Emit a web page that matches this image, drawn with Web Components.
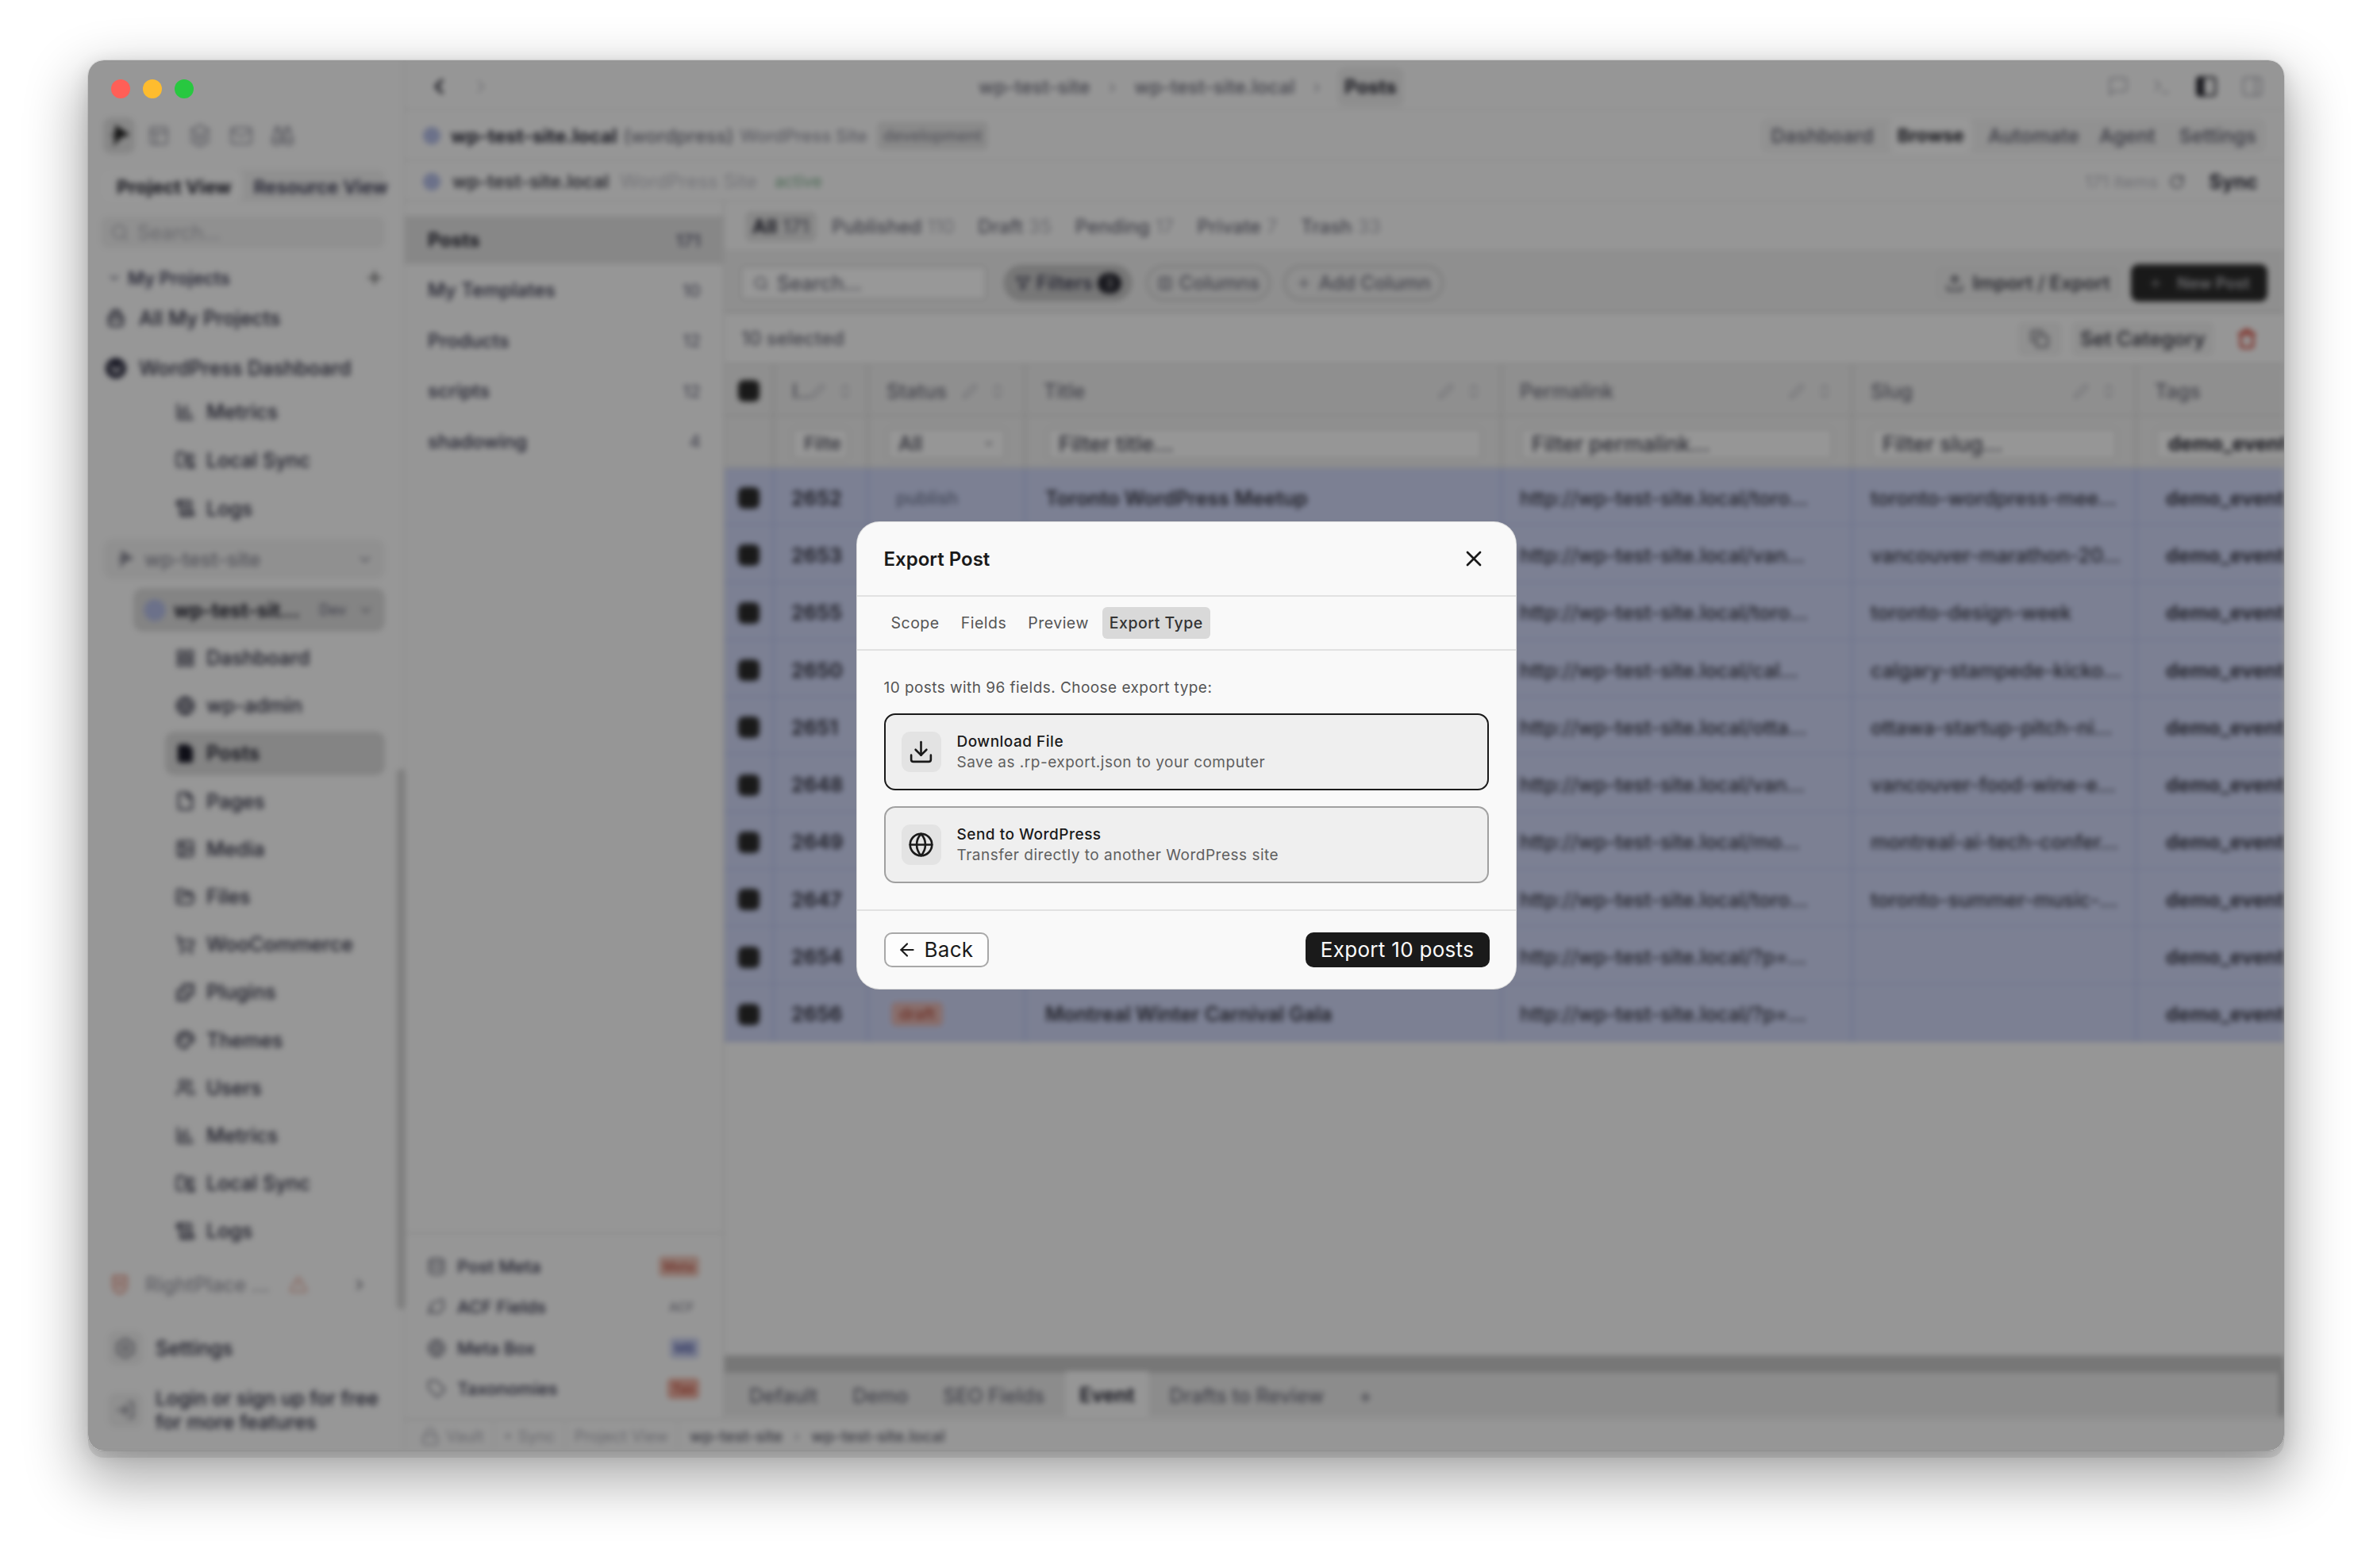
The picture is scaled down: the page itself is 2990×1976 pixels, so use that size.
<!DOCTYPE html>
<html lang="en">
<head>
<meta charset="utf-8">
<title>Export Post</title>
<style>
  html, body { margin: 0; background: #fff; }
  body { width: 2990px; height: 1976px; padding: 76px 0 0 111px; box-sizing: border-box; font-family: Inter, "Liberation Sans", sans-serif; overflow: hidden; }
</style>
</head>
<body>
<app-window>
  <side-bar></side-bar>
  <main-pane></main-pane>
  <traffic-lights slot="chrome"></traffic-lights>
  <export-dialog slot="dialog"></export-dialog>
</app-window>

<script>
const ICONS = {
  download: '<path d="M21 15v4a2 2 0 0 1-2 2H5a2 2 0 0 1-2-2v-4"/><path d="M7 10l5 5 5-5"/><path d="M12 15V3"/>',
  globe: '<circle cx="12" cy="12" r="10"/><path d="M2 12h20"/><path d="M12 2a15.3 15.3 0 0 1 4 10 15.3 15.3 0 0 1-4 10 15.3 15.3 0 0 1-4-10 15.3 15.3 0 0 1 4-10z"/>',
  x: '<path d="M18 6 6 18"/><path d="m6 6 12 12"/>',
  back: '<path d="M19 12H5"/><path d="m12 19-7-7 7-7"/>',
  metrics: '<path d="M3 3v16a2 2 0 0 0 2 2h16"/><path d="M8 17V9"/><path d="M13 17V5"/><path d="M18 17v-3"/>',
  sync: '<path d="M9 20H4a2 2 0 0 1-2-2V5a2 2 0 0 1 2-2h3.9a2 2 0 0 1 1.69.9l.81 1.2a2 2 0 0 0 1.67.9H20a2 2 0 0 1 2 2v.5"/><path d="M12 10v4h4"/><path d="m12 14 1.535-1.605a5 5 0 0 1 8 1.5"/><path d="M22 22v-4h-4"/><path d="m22 18-1.535 1.605a5 5 0 0 1-8-1.5"/>',
  logs: '<path d="M15 12h-5"/><path d="M15 8h-5"/><path d="M19 17V5a2 2 0 0 0-2-2H4"/><path d="M8 21h12a2 2 0 0 0 2-2v-1a1 1 0 0 0-1-1H11a1 1 0 0 0-1 1v1a2 2 0 1 1-4 0V5a2 2 0 1 0-4 0v2a1 1 0 0 0 1 1h3"/>',
  dashboard: '<rect x="3" y="3" width="7" height="8" rx="1"/><rect x="14" y="3" width="7" height="8" rx="1"/><rect x="14" y="14" width="7" height="7" rx="1"/><rect x="3" y="14" width="7" height="7" rx="1"/>',
  post: '<path fill="currentColor" d="M15 2H6a2 2 0 0 0-2 2v16a2 2 0 0 0 2 2h12a2 2 0 0 0 2-2V7Z"/>',
  file: '<path d="M15 2H6a2 2 0 0 0-2 2v16a2 2 0 0 0 2 2h12a2 2 0 0 0 2-2V7Z"/><path d="M14 2v4a2 2 0 0 0 2 2h4"/>',
  image: '<rect x="3" y="3" width="18" height="18" rx="2"/><circle cx="9" cy="9" r="2"/><path d="m21 15-3.086-3.086a2 2 0 0 0-2.828 0L6 21"/>',
  folder: '<path d="m6 14 1.5-2.9A2 2 0 0 1 9.24 10H20a2 2 0 0 1 1.94 2.5l-1.54 6a2 2 0 0 1-1.95 1.5H4a2 2 0 0 1-2-2V5a2 2 0 0 1 2-2h3.9a2 2 0 0 1 1.69.9l.81 1.2a2 2 0 0 0 1.67.9H18a2 2 0 0 1 2 2v2"/>',
  cart: '<circle cx="8" cy="21" r="1"/><circle cx="19" cy="21" r="1"/><path d="M2.05 2.05h2l2.66 12.42a2 2 0 0 0 2 1.58h9.78a2 2 0 0 0 1.95-1.57l1.65-7.43H5.12"/>',
  puzzle: '<path d="M19.439 7.85c-.049.322.059.648.289.878l1.568 1.568c.47.47.706 1.087.706 1.704s-.235 1.233-.706 1.704l-1.611 1.611a.98.98 0 0 1-.837.276c-.47-.07-.802-.48-.968-.925a2.501 2.501 0 1 0-3.214 3.214c.446.166.855.497.925.968a.979.979 0 0 1-.276.837l-1.61 1.61a2.404 2.404 0 0 1-1.705.707 2.402 2.402 0 0 1-1.704-.706l-1.568-1.568a1.026 1.026 0 0 0-.877-.29c-.493.074-.84.504-1.02.968a2.5 2.5 0 1 1-3.237-3.237c.464-.18.894-.527.967-1.02a1.026 1.026 0 0 0-.289-.877l-1.568-1.568A2.402 2.402 0 0 1 1.998 12c0-.617.236-1.234.706-1.704L4.23 8.77c.24-.24.581-.353.917-.303.515.077.877.528 1.073 1.01a2.5 2.5 0 1 0 3.259-3.259c-.482-.196-.933-.558-1.01-1.073-.05-.336.062-.676.303-.917l1.525-1.525A2.402 2.402 0 0 1 12 1.998c.617 0 1.234.236 1.704.706l1.568 1.568c.23.23.556.338.877.29.493-.074.84-.504 1.02-.968a2.5 2.5 0 1 1 3.237 3.237c-.464.18-.894.527-.967 1.02Z"/>',
  palette: '<path d="M12 22a1 1 0 0 1 0-20 10 9 0 0 1 10 9 5 5 0 0 1-5 5h-2.25a1.75 1.75 0 0 0-1.4 2.8l.3.4a1.75 1.75 0 0 1-1.4 2.8z"/><circle cx="13.5" cy="6.5" r="1"/><circle cx="17.5" cy="10.5" r="1"/><circle cx="6.5" cy="12.5" r="1"/><circle cx="8.5" cy="7.5" r="1"/>',
  users: '<path d="M16 21v-2a4 4 0 0 0-4-4H6a4 4 0 0 0-4 4v2"/><circle cx="9" cy="7" r="4"/><path d="M22 21v-2a4 4 0 0 0-3-3.87"/><path d="M16 3.13a4 4 0 0 1 0 7.75"/>',
  gear: '<path d="M12 2l8.66 5v10L12 22l-8.66-5V7z"/><circle cx="12" cy="12" r="3"/>',
  login: '<path d="M15 3h4a2 2 0 0 1 2 2v14a2 2 0 0 1-2 2h-4"/><path d="m10 17 5-5-5-5"/><path d="M15 12H3"/>',
  layout: '<rect x="3" y="3" width="18" height="18" rx="2"/><path d="M3 9h18"/><path d="M9 21V9"/>',
  layers: '<path d="m12 2 9 5-9 5-9-5z"/><path d="m3 12 9 5 9-5"/><path d="m3 17 9 5 9-5"/>',
  mail: '<rect x="2" y="4" width="20" height="16" rx="2"/><path d="m22 7-10 6L2 7"/>',
  binoculars: '<path d="M10 10h4"/><path d="M19 7V4a1 1 0 0 0-1-1h-2a1 1 0 0 0-1 1v3"/><path d="M20 21a2 2 0 0 0 2-2v-3.851c0-1.39-2-2.962-2-4.829V8a1 1 0 0 0-1-1h-4a1 1 0 0 0-1 1v11a2 2 0 0 0 2 2z"/><path d="M22 16H2"/><path d="M4 21a2 2 0 0 1-2-2v-3.851c0-1.39 2-2.962 2-4.829V8a1 1 0 0 1 1-1h4a1 1 0 0 1 1 1v11a2 2 0 0 1-2 2z"/><path d="M9 7V4a1 1 0 0 0-1-1H6a1 1 0 0 0-1 1v3"/>',
  briefcase: '<rect x="4" y="8" width="16" height="13" rx="3"/><path d="M8 8V4a1 1 0 0 1 1-1h6a1 1 0 0 1 1 1v4"/><path d="M4 13h16"/>',
  mark: '<path fill="currentColor" stroke="none" d="M8 1l15 10-9 3-8 9 2-10-5-2 5-1z"/>',
  wp: '<circle fill="currentColor" cx="12" cy="12" r="11"/><path stroke="#fff" stroke-width="1.5" d="M6 8l4 10 2-7 3 7 3-10"/>',
  dot: '<circle fill="currentColor" stroke="none" cx="12" cy="12" r="11"/>',
  search: '<circle cx="11" cy="11" r="8"/><path d="m21 21-4.3-4.3"/>',
  plus: '<path d="M5 12h14"/><path d="M12 5v14"/>',
  down: '<path d="m6 9 6 6 6-6"/>',
  right: '<path d="m9 18 6-6-6-6"/>',
  left: '<path d="m15 18-6-6 6-6"/>',
  funnel: '<path d="M3 4h18l-7 8v6l-4 2v-8z"/>',
  columns: '<rect x="3" y="3" width="18" height="18" rx="2"/><path d="M9 3v18"/><path d="M15 3v18"/>',
  pencil: '<path d="M17 3a2.8 2.8 0 1 1 4 4L7.5 20.5 2 22l1.5-5.5z"/>',
  sort: '<path d="m7 15 5 5 5-5"/><path d="m7 9 5-5 5 5"/>',
  copy: '<rect x="8" y="8" width="14" height="14" rx="2"/><path d="M4 16c-1.1 0-2-.9-2-2V4c0-1.1.9-2 2-2h10c1.1 0 2 .9 2 2"/>',
  trash: '<path d="M3 6h18"/><path d="M19 6v14c0 1-1 2-2 2H7c-1 0-2-1-2-2V6"/><path d="M8 6V4c0-1 1-2 2-2h4c1 0 2 1 2 2v2"/>',
  upload: '<path d="M21 15v4a2 2 0 0 1-2 2H5a2 2 0 0 1-2-2v-4"/><path d="m17 8-5-5-5 5"/><path d="M12 3v12"/>',
  refresh: '<path d="M21 12a9 9 0 1 1-3-6.7L21 8"/><path d="M21 3v5h-5"/>',
  lock: '<rect x="3" y="11" width="18" height="11" rx="2"/><path d="M7 11V7a5 5 0 0 1 10 0v4"/>',
  alert: '<path d="m21.7 18-8-14a2 2 0 0 0-3.5 0l-8 14A2 2 0 0 0 4 21h16a2 2 0 0 0 1.7-3"/><path d="M12 9v4"/><path d="M12 17h.01"/>',
  crest: '<path d="M5 3h14v10a7 8 0 0 1-14 0z"/><path d="M9 9h6"/><path d="M9 13h6"/>',
  message: '<path d="M21 15a2 2 0 0 1-2 2H7l-4 4V5a2 2 0 0 1 2-2h14a2 2 0 0 1 2 2z"/>',
  terminal: '<path d="m4 17 6-6-6-6"/><path d="M12 19h8"/>',
  panel: '<rect x="3" y="3" width="18" height="18" rx="2"/><path fill="currentColor" d="M3 5a2 2 0 0 1 2-2h4v18H5a2 2 0 0 1-2-2z"/>',
  panelr: '<rect x="3" y="3" width="18" height="18" rx="2"/><path d="M15 3v18"/>',
  database: '<ellipse cx="12" cy="5" rx="9" ry="3"/><path d="M3 5v14a9 3 0 0 0 18 0V5"/><path d="M3 12a9 3 0 0 0 18 0"/>',
  tag: '<path d="M12.6 2.6a2 2 0 0 0-1.4-.6H4a2 2 0 0 0-2 2v7.2a2 2 0 0 0 .6 1.4l8.7 8.7a2.4 2.4 0 0 0 3.4 0l6.6-6.6a2.4 2.4 0 0 0 0-3.4z"/>',
  leaf: '<path d="M11 20A7 7 0 0 1 9.8 6.1C15.5 5 17 4.5 19 2c1 2 2 4.2 2 8 0 5.5-4.8 10-10 10Z"/><path d="M2 21c0-3 1.9-5.4 5-6"/>'
};

// small inline svg, stroke follows the text colour
class UiIcon extends HTMLElement {
  connectedCallback() {
    const size = this.getAttribute('size') || 24;
    const sw = this.getAttribute('sw') || 2;
    this.attachShadow({ mode: 'open' }).innerHTML = `
      <style>:host { display: inline-flex; flex: none; width: ${size}px; height: ${size}px; } svg { display: block; }</style>
      <svg width="${size}" height="${size}" viewBox="0 0 24 24" fill="none" stroke="currentColor" stroke-width="${sw}" stroke-linecap="round" stroke-linejoin="round">${ICONS[this.getAttribute('name')] || ''}</svg>`;
  }
}
customElements.define('ui-icon', UiIcon);

class AppWindow extends HTMLElement {
  connectedCallback() {
    this.attachShadow({ mode: 'open' }).innerHTML = `
      <style>
        :host {
          display: block; position: relative; width: 2767px; height: 1752px; border-radius: 20px; background: #fbfbfb;
          box-shadow: 0 0 0 1px rgba(0,0,0,.07), 0 9px 0 0 rgba(0,0,0,.08), 0 30px 70px 10px rgba(0,0,0,.32), 0 6px 24px rgba(0,0,0,.12);
        }
        .clip { position: absolute; inset: 0; border-radius: 20px; overflow: hidden; background: #fbfbfb; }
        .app { display: flex; height: 100%; filter: blur(3.6px); }
        .scrim { position: absolute; inset: 0; background: rgba(0,0,0,.4); display: flex; align-items: center; justify-content: center; }
      </style>
      <div class="clip">
        <div class="app"><slot></slot></div>
        <div class="scrim"><slot name="dialog"></slot></div>
        <slot name="chrome"></slot>
      </div>`;
  }
}
customElements.define('app-window', AppWindow);

class TrafficLights extends HTMLElement {
  connectedCallback() {
    this.attachShadow({ mode: 'open' }).innerHTML = `
      <style>
        :host { position: absolute; left: 28.5px; top: 24px; display: flex; gap: 16.2px; }
        i { width: 24px; height: 24px; border-radius: 50%; }
      </style>
      <i style="background:#ff5f57"></i><i style="background:#febc2e"></i><i style="background:#28c840"></i>`;
  }
}
customElements.define('traffic-lights', TrafficLights);

// one row of the left tree
class SideItem extends HTMLElement {
  connectedCallback() {
    const h = this.getAttribute('h') || 60.2;
    const sub = this.hasAttribute('sub');
    const active = this.hasAttribute('active');
    this.attachShadow({ mode: 'open' }).innerHTML = `
      <style>
        :host { display: flex; align-items: center; height: ${h}px; padding-left: ${sub ? 81 : 0}px; color: #2a2a3e; font-size: 25px; font-weight: ${active ? 600 : 500}; }
        .row { flex: 1; height: 55px; display: flex; align-items: center; gap: ${sub ? 14 : 16}px; padding-left: ${sub ? 13 : 6}px; border-radius: 12px; background: ${active ? '#dcdcdc' : 'none'}; color: ${active ? '#1a1a28' : 'inherit'}; }
      </style>
      <div class="row"><ui-icon name="${this.getAttribute('icon')}" size="${sub ? 25 : 26}" sw="2.2"></ui-icon><span><slot></slot></span></div>`;
  }
}
customElements.define('side-item', SideItem);

class SideBar extends HTMLElement {
  connectedCallback() {
    const sub = [['dashboard','Dashboard'],['globe','wp-admin'],['post','Posts',1],['file','Pages'],['image','Media'],['folder','Files'],['cart','WooCommerce'],['puzzle','Plugins'],['palette','Themes'],['users','Users'],['metrics','Metrics'],['sync','Local Sync'],['logs','Logs']];
    this.attachShadow({ mode: 'open' }).innerHTML = `
      <style>
        :host { display: flex; flex-direction: column; position: relative; flex: none; box-sizing: border-box; width: 399px; padding: 72px 23px 0 16px; border-right: 2px solid #ececec; background: #fcfcfc; color: #2a2a3e; }
        .rail { display: flex; align-items: center; height: 46px; color: #8c8c98; }
        .rail b { display: flex; width: 40px; height: 46px; margin: 0 4px 0 3px; align-items: center; justify-content: center; border-radius: 10px; background: #e2e2e2; color: #222; }
        .rail span { display: flex; justify-content: center; width: 52px; }
        .seg { display: flex; align-items: center; height: 40px; margin-top: 20px; border-radius: 9px; background: #f0f0f0; font-size: 23.5px; font-weight: 600; color: #34344e; }
        .seg span { padding: 3px 0 0 14px; line-height: 37px; white-space: nowrap; }
        .seg .on { background: #fdfdfd; border-radius: 9px; color: #22222e; padding: 3px 14px 0 20px; font-weight: 700; font-size: 23.5px; }
        .search { display: flex; align-items: center; gap: 10px; height: 40px; margin-top: 19px; padding: 0 12px; border-radius: 9px; background: #f0f0f0; color: #adadb4; font-size: 25px; }
        .head { display: flex; align-items: center; height: 40px; margin-top: 17px; padding-left: 8px; gap: 8px; font-size: 22.5px; font-weight: 600; color: #42425a; }
        .head ui-icon:last-child { margin-left: auto; margin-right: 0; }
        .project { display: flex; align-items: center; gap: 12px; height: 51px; margin-top: 8px; padding: 0 14px; margin-left: 3px; border-radius: 12px; background: #f1f1f1; color: #8a8a96; font-size: 25px; font-weight: 500; }
        .project ui-icon:last-child { margin-left: auto; }
        .site { display: flex; align-items: center; gap: 9px; height: 55px; margin: 11px 0 3px 41px; padding: 0 14px 0 12px; border-radius: 12px; background: #dcdcdc; font-size: 24.5px; font-weight: 700; color: #22222e; }
        .site em { margin-left: auto; font-style: normal; font-size: 18px; font-weight: 500; color: #6c6c80; }
        .site ui-icon:last-child { color: #70707c; margin-left: 6px; }
        .dotblue { color: #b4bde6; }
        .rp { display: flex; align-items: center; height: 50px; margin-top: 13px; padding-left: 10px; gap: 18px; color: #9c9ca6; font-size: 25px; font-weight: 500; }
        .rp .crest { color: #e0806a; }
        .rp .warn { color: #e4a696; margin-left: 6px; }
        .rp .go { margin-left: 36px; color: #60606c; }
        .foot { display: flex; align-items: center; gap: 16px; padding-left: 9px; font-size: 25px; font-weight: 500; line-height: 30px; }
        .foot.small { font-size: 24.5px; }
        .foot b { display: flex; align-items: center; justify-content: center; width: 44px; height: 44px; border-radius: 11px; background: #f0f0f0; font-weight: 500; color: #70707c; flex: none; }
        .thumb { position: absolute; top: 893px; right: -3px; width: 11px; height: 681px; background: #d4d4d4; border-radius: 6px; }
      </style>
      <div class="rail">
        <b><ui-icon name="mark" size="30"></ui-icon></b>
        <span><ui-icon name="layout" size="28" sw="1.6"></ui-icon></span><span><ui-icon name="layers" size="32" sw="1.6"></ui-icon></span><span><ui-icon name="mail" size="30" sw="1.6"></ui-icon></span><span><ui-icon name="binoculars" size="30" sw="1.6"></ui-icon></span>
      </div>
      <div class="seg"><span class="on">Project View</span><span>Resource View</span></div>
      <div class="search"><ui-icon name="search" size="24"></ui-icon><span>Search...</span></div>
      <div class="head"><ui-icon name="down" size="18"></ui-icon><span>My Projects</span><ui-icon name="plus" size="26" style="color:#444"></ui-icon></div>
      <side-item icon="briefcase" h="62">All My Projects</side-item>
      <side-item icon="wp" h="48" style="margin-top:8px">WordPress Dashboard</side-item>
      <side-item sub icon="metrics" h="61">Metrics</side-item>
      <side-item sub icon="sync" h="61">Local Sync</side-item>
      <side-item sub icon="logs" h="61">Logs</side-item>
      <div class="project"><ui-icon name="mark" size="26"></ui-icon><span>wp-test-site</span><ui-icon name="down" size="22"></ui-icon></div>
      <div class="site"><ui-icon class="dotblue" name="dot" size="30"></ui-icon><span>wp-test-sit...</span><em>Dev</em><ui-icon name="down" size="20"></ui-icon></div>
      ${sub.map(s => `<side-item sub icon="${s[0]}" ${s[2] ? 'active' : ''}>${s[1]}</side-item>`).join('')}
      <div class="rp"><ui-icon class="crest" name="crest" size="28"></ui-icon><span>RightPlace ...</span><ui-icon class="warn" name="alert" size="24"></ui-icon><ui-icon class="go" name="right" size="22"></ui-icon></div>
      <div class="foot" style="margin-top:33px"><b><ui-icon name="gear" size="28"></ui-icon></b><span>Settings</span></div>
      <div class="foot small" style="margin-top:26px"><b><ui-icon name="login" size="26"></ui-icon></b><span>Login or sign up for free<br>for more features</span></div>
      <div class="thumb"></div>`;
  }
}
customElements.define('side-bar', SideBar);

class MainPane extends HTMLElement {
  connectedCallback() {
    this.attachShadow({ mode: 'open' }).innerHTML = `
      <style>
        :host { display: flex; flex-direction: column; flex: 1; min-width: 0; background: #fbfbfb; color: #2a2a38; }
        .bar { display: flex; align-items: center; flex: none; box-sizing: border-box; border-bottom: 2px solid #eaeaea; }
        .title { height: 63px; padding: 5px 25px 0 28px; font-size: 24px; font-weight: 500; color: #6e6e7c; }
        .title .nav { color: #2c2c38; }
        .title .nav2 { color: #c4c4ca; margin-left: 24px; }
        .crumbs { display: flex; align-items: center; margin-left: 613px; gap: 23px; white-space: nowrap; }
        .crumbs i { font-style: normal; color: #b0b0b8; }
        .crumbs b { padding: 10px 9px; margin-left: -2px; border-radius: 9px; background: #ededed; color: #22222e; font-weight: 700; }
        .tools { display: flex; align-items: center; gap: 28px; margin-left: auto; color: #a8a8b0; }
        .tools .on { color: #26262f; }
        .site { height: 64px; padding: 2px 23px 0 22px; font-size: 24px; white-space: nowrap; }
        .site b { font-weight: 700; margin-left: 12px; }
        .site > span { margin-left: 8px; color: #777784; font-weight: 500; }
        .site .lite { color: #9a9aa6; font-size: 22px; }
        .site .env { margin-left: 12px; padding: 6px 8px; border-radius: 6px; background: #e6e6e6; color: #8a8a96; font-size: 20px; }
        .views { display: flex; align-items: center; margin-left: auto; height: 44px; padding: 0 12px 0 14px; gap: 22px; border-radius: 9px; background: #f2f2f2; color: #6e6e7c; font-size: 24.5px; font-weight: 600; }
        .views b { padding: 8px 10px; margin: 0 -2px; border-radius: 8px; background: #fdfdfd; color: #26262f; font-weight: 700; font-size: 23px; }
        .env-bar { height: 51px; padding: 2px 33px 0 22px; font-size: 23px; white-space: nowrap; }
        .env-bar b { margin-left: 14px; font-weight: 600; color: #44444f; }
        .env-bar span { margin-left: 14px; color: #c0c0c8; }
        .env-bar .lite { font-size: 24px; }
        .env-bar .ok { color: #7fb08f; font-size: 21px; margin-left: 22px; }
        .env-bar .right { margin-left: auto; display: flex; align-items: center; gap: 14px; color: #b8b8c0; font-size: 22px; }
        .env-bar .right ui-icon { color: #5a5a66; }
        .env-bar .right b { margin-left: 16px; font-size: 25px; font-weight: 700; color: #2a2a38; }
        .dot { color: #b4bde6; }
        .body { display: flex; flex: 1; min-height: 0; }
        .status { height: 40px; border-bottom: 0; border-top: 2px solid #e4e4e4; padding: 2px 0 0 9px; font-size: 20px; color: #adadb6; white-space: nowrap; }
        .status span { display: flex; align-items: center; gap: 8px; height: 100%; padding: 0 11px; border-right: 2px solid #ececec; }
        .status .path { border: 0; padding-left: 14px; gap: 14px; color: #5e5e6c; font-size: 20px; font-weight: 500; }
        .status em { font-style: normal; }
      </style>
      <div class="bar title">
        <ui-icon class="nav" name="left" size="30" sw="3"></ui-icon><ui-icon class="nav2" name="right" size="28"></ui-icon>
        <div class="crumbs"><span>wp-test-site</span><i>›</i><span>wp-test-site.local</span><i>›</i><b>Posts</b></div>
        <div class="tools"><ui-icon name="message" size="28" sw="1.6"></ui-icon><ui-icon name="terminal" size="26" sw="1.6"></ui-icon><ui-icon class="on" name="panel" size="30"></ui-icon><ui-icon name="panelr" size="30" sw="1.6"></ui-icon></div>
      </div>
      <div class="bar site">
        <ui-icon class="dot" name="dot" size="24"></ui-icon><b>wp-test-site.local</b><span>(wordpress)</span><span class="lite">WordPress Site</span><span class="env">development</span>
        <div class="views"><span>Dashboard</span><b>Browse</b><span style="margin-right:3px">Automate</span><span style="margin-right:8px">Agent</span><span>Settings</span></div>
      </div>
      <div class="bar env-bar">
        <ui-icon class="dot" name="dot" size="24"></ui-icon><b>wp-test-site.local</b><span class="lite">WordPress Site</span><span class="ok">active</span>
        <div class="right"><span style="margin:0;color:inherit">171 items</span><ui-icon name="refresh" size="20"></ui-icon><b>Sync</b></div>
      </div>
      <div class="body"><collection-list></collection-list><posts-panel></posts-panel></div>
      <div class="bar status"><span><ui-icon name="lock" size="24"></ui-icon>Vault</span><span>+ Sync</span><span>Project View</span><span class="path"><em>wp-test-site</em><em style="color:#b0b0b8">›</em><em>wp-test-site.local</em></span></div>`;
  }
}
customElements.define('main-pane', MainPane);

class CollectionList extends HTMLElement {
  connectedCallback() {
    const rows = [['Posts','171',1],['My Templates','10'],['Products','12'],['scripts','12'],['shadowing','4']];
    const meta = [['database','Post Meta','Meta','#eec4b8','#c05a4c'],['leaf','ACF Fields','ACF','none','#9a9aa6'],['globe','Meta Box','MB','#ccd2f0','#5660a8'],['tag','Taxonomies','Tax','#eeb0a2','#c0503e']];
    this.attachShadow({ mode: 'open' }).innerHTML = `
      <style>
        :host { display: flex; flex-direction: column; flex: none; box-sizing: border-box; width: 403px; border-right: 2px solid #e4e4e4; padding-top: 18px; font-size: 24px; font-weight: 500; color: #33334a; }
        .row { display: flex; align-items: center; justify-content: space-between; height: 63.5px; padding: 0 28px 0 29px; }
        .row em { font-style: normal; font-size: 22px; color: #77778a; }
        .on { background: #e2e2e2; font-weight: 700; color: #1e1e2a; height: 61px; margin-bottom: 1px; }
        .meta { margin-top: auto; border-top: 2px solid #e4e4e4; padding: 15px 0 12px; font-size: 22px; }
        .m { display: flex; align-items: center; gap: 14px; height: 51.5px; padding: 0 30px 0 28px; }
        .m ui-icon { color: #6e6e7c; }
        .m i { margin-left: auto; padding: 3px 6px; border-radius: 5px; font-style: normal; font-size: 16px; font-weight: 600; }
      </style>
      ${rows.map(r => `<div class="row ${r[2] ? 'on' : ''}"><span>${r[0]}</span><em>${r[1]}</em></div>`).join('')}
      <div class="meta">${meta.map(m => `<div class="m"><ui-icon name="${m[0]}" size="24"></ui-icon><span>${m[1]}</span><i style="background:${m[3]};color:${m[4]}">${m[2]}</i></div>`).join('')}</div>`;
  }
}
customElements.define('collection-list', CollectionList);

class PostsPanel extends HTMLElement {
  connectedCallback() {
    const tabs = [['All','171'],['Published','110'],['Draft','35'],['Pending','17'],['Private','7'],['Trash','33']];
    const views = ['Default','Demo','SEO Fields','Event','Drafts to Review'];
    this.attachShadow({ mode: 'open' }).innerHTML = `
      <style>
        :host { display: flex; flex-direction: column; flex: 1; min-width: 0; overflow: hidden; color: #2a2a38; font-size: 24px; }
        .tabs { display: flex; align-items: center; flex: none; box-sizing: border-box; height: 61px; padding: 2px 0 0 26px; gap: 29.5px; font-weight: 500; color: #6e6e7c; }
        .tabs em { font-style: normal; color: #b2b2ba; margin-left: 7px; font-weight: 400; }
        .tabs .all { padding: 5px 9px; margin-right: -10px; border-radius: 8px; background: #e3e3e3; color: #2a2a38; font-weight: 700; }
        .tabs .all em { color: #6e6e7c; font-weight: 500; }
        .tools { display: flex; align-items: center; flex: none; box-sizing: border-box; height: 80px; padding: 4px 21px 0 19px; background: #efefef; border-top: 2px solid #e9e9e9; border-bottom: 3px solid #dedede; color: #6e6e7c; font-weight: 500; }
        .search { display: flex; align-items: center; gap: 10px; width: 312px; height: 45px; box-sizing: border-box; padding: 0 14px; border: 3px solid #dedede; border-radius: 7px; background: #fdfdfd; font-size: 25px; }
        .pill { display: flex; align-items: center; justify-content: center; gap: 8px; height: 45px; box-sizing: border-box; border: 3px solid #cfcfcf; border-radius: 23px; white-space: nowrap; }
        .pill.on { width: 161px; margin-left: 21px; background: #c8c8c8; border-color: #bcbcbc; color: #33334a; gap: 6px; }
        .pill.on i { display: inline-block; width: 30px; height: 26px; line-height: 26px; text-align: center; border-radius: 13px; background: #262630; color: #aaa; font-style: normal; font-size: 17px; }
        .pill.col { width: 157px; margin-left: 18px; }
        .pill.add { width: 202px; margin-left: 16px; }
        .ie { display: flex; align-items: center; justify-content: center; gap: 10px; box-sizing: border-box; width: 236px; margin-left: auto; height: 46px; border-radius: 8px; background: #ececec; font-weight: 600; color: #44444f; }
        .new { display: flex; align-items: center; justify-content: center; gap: 18px; width: 172px; height: 47px; margin-left: 12px; border-radius: 9px; background: #2b2b2b; color: #b4b4b8; font-size: 20px; font-weight: 600; }
        .sel { display: flex; align-items: center; flex: none; box-sizing: border-box; height: 63px; padding: 0 21px; font-weight: 500; color: #6e6e7c; }
        .sel .copy { margin-left: auto; display: flex; align-items: center; justify-content: center; width: 56px; height: 44px; border-radius: 8px; background: #f0f0f0; color: #55555f; }
        .sel .cat { display: flex; align-items: center; justify-content: center; width: 180px; height: 44px; margin-left: 12px; border-radius: 8px; background: #f0f0f0; font-size: 25px; font-weight: 600; color: #44444f; }
        .sel .del { display: flex; margin-left: 15px; width: 52px; height: 44px; align-items: center; justify-content: center; color: #d4483a; }
        .fill { flex: 1; }
        .hbar { flex: none; height: 22px; background: #c6c6c6; }
        .views { display: flex; align-items: center; flex: none; position: relative; height: 55px; padding: 3px 0 0 31px; box-sizing: border-box; gap: 44px; background: #eaeaea; color: #6e6e7c; font-size: 25px; font-weight: 500; border-right: 6px solid #b5b5b5; }
        .views b { display: flex; align-items: center; height: 59px; margin: -3px -17px 0; padding: 0 17px; background: #fbfbfb; color: #2a2a38; font-weight: 700; }
        .gap { flex: none; height: 3px; }
      </style>
      <div class="tabs">${tabs.map((t, i) => `<span class="${i ? '' : 'all'}">${t[0]}<em>${t[1]}</em></span>`).join('')}</div>
      <div class="tools">
        <div class="search"><ui-icon name="search" size="20"></ui-icon><span>Search...</span></div>
        <div class="pill on"><ui-icon name="funnel" size="22"></ui-icon><span>Filters</span><i>3</i></div>
        <div class="pill col"><ui-icon name="columns" size="20"></ui-icon><span>Columns</span></div>
        <div class="pill add"><ui-icon name="plus" size="20"></ui-icon><span>Add Column</span></div>
        <div class="ie"><ui-icon name="upload" size="24"></ui-icon><span>Import / Export</span></div>
        <div class="new"><ui-icon name="plus" size="18"></ui-icon><span>New Post</span></div>
      </div>
      <div class="sel"><span>10 selected</span><div class="copy"><ui-icon name="copy" size="24"></ui-icon></div><div class="cat">Set Category</div><div class="del"><ui-icon name="trash" size="26" sw="3"></ui-icon></div></div>
      <posts-table></posts-table>
      <div class="fill"></div>
      <div class="hbar"></div>
      <div class="views">${views.map(v => v === 'Event' ? `<b>${v}</b>` : `<span>${v}</span>`).join('')}<span>+</span></div>
      <div class="gap"></div>`;
  }
}
customElements.define('posts-panel', PostsPanel);

class PostsTable extends HTMLElement {
  connectedCallback() {
    const base = 'http://wp-test-site.local/';
    const rows = [
      ['2652','publish','Toronto WordPress Meetup',base+'toro...','toronto-wordpress-mee...'],
      ['2653','','',base+'van...','vancouver-marathon-20...'],
      ['2655','','',base+'toro...','toronto-design-week'],
      ['2650','','',base+'cal...','calgary-stampede-kicko...'],
      ['2651','','',base+'otta...','ottawa-startup-pitch-ni...'],
      ['2648','','',base+'van...','vancouver-food-wine-e...'],
      ['2649','','',base+'mo...','montreal-ai-tech-confer...'],
      ['2647','','',base+'toro...','toronto-summer-music-...'],
      ['2654','','',base+'?p=...',''],
      ['2656','draft','Montreal Winter Carnival Gala',base+'?p=...','']
    ];
    const head = (t, tools) => `<div class="c h"><span>${t}</span>${tools ? '<ui-icon class="t" name="pencil" size="20"></ui-icon><ui-icon class="t s" name="sort" size="22"></ui-icon>' : ''}</div>`;
    const input = (t, cls) => `<div class="c f"><div class="in ${cls || ''}"><span>${t}</span></div></div>`;
    this.attachShadow({ mode: 'open' }).innerHTML = `
      <style>
        :host { display: grid; flex: none; grid-template-columns: 63px 119px 198px 600px 442px 358px 300px; grid-template-rows: 67px 65px repeat(10, 72.3px); font-size: 25px; font-weight: 500; color: #33333f; white-space: nowrap; }
        .c { display: flex; align-items: center; box-sizing: border-box; min-width: 0; overflow: hidden; padding: 0 22px; border-right: 3px solid #dcdcdc; border-bottom: 2px solid #dedede; }
        .h { background: #efefef; color: #6e6e7c; border-top: 2px solid #dedede; padding-top: 2px; }
        .h .t { color: #b8b8c0; margin-left: auto; }
        .h .s { margin-left: 14px; }
        .f { background: #f0f0f0; color: #4a4a58; padding-top: 5px; font-size: 27px; }
        .in { display: flex; align-items: center; justify-content: space-between; flex: 1; height: 35px; padding: 0 12px; border: 3px solid #e2e2e2; border-radius: 6px; background: #fbfbfb; overflow: hidden; }
        .in.bold { font-weight: 700; color: #22222e; padding: 0 0 0 14px; font-size: 25px; }
        .b { background: #cfd6f6; border-right-color: #bcc5ec; border-bottom-color: #bcc5ec; padding-top: 5px; }
        .box { width: 27px; height: 27px; border-radius: 7px; background: #2b2b2b; flex: none; margin-left: -5px; }
        .id { font-weight: 700; color: #3a3a48; }
        .title { font-weight: 600; }
        .badge { padding: 3px 10px; margin-left: 2px; border-radius: 6px; font-size: 22.5px; }
        .publish { color: #6d7590; }
        .draft { background: #e4b8b4; color: #b8503e; font-size: 20px; margin-left: 6px; }
        .p { font-weight: 500; color: #33333f; }
        .tg { font-weight: 700; color: #3a3a48; padding-left: 36px; }
      </style>
      <div class="c h"><span class="box"></span></div>
      ${head('I..', 1)}${head('Status', 1)}${head('Title', 1)}${head('Permalink', 1)}${head('Slug', 1)}${head('Tags')}
      <div class="c f"></div>
      <div class="c f" style="padding:5px 22px 0 21px"><div class="in" style="padding:0 6px 0 12px;justify-content:center;font-size:23px"><span>Filte</span></div></div>
      <div class="c f"><div class="in" style="font-size:25px"><span>All</span><ui-icon name="down" size="14"></ui-icon></div></div>
      <div class="c f" style="padding-left:26px"><div class="in"><span>Filter title...</span></div></div>
      ${input('Filter permalink...')}${input('Filter slug...')}${input('demo_event', 'bold')}
      ${rows.map(r => `
        <div class="c b"><span class="box"></span></div>
        <div class="c b id" style="padding-left:21px">${r[0]}</div>
        <div class="c b">${r[1] ? `<span class="badge ${r[1]}">${r[1]}</span>` : ''}</div>
        <div class="c b title" style="padding-left:24px">${r[2]}</div>
        <div class="c b p" style="padding-left:22px">${r[3]}</div>
        <div class="c b p" style="padding-left:22px">${r[4]}</div>
        <div class="c b tg">demo_event</div>`).join('')}`;
  }
}
customElements.define('posts-table', PostsTable);

class ExportOption extends HTMLElement {
  connectedCallback() {
    const picked = this.hasAttribute('picked');
    this.attachShadow({ mode: 'open' }).innerHTML = `
      <style>
        :host { display: flex; align-items: center; box-sizing: border-box; height: 97px; padding: 0 20px; gap: 20px; border: ${picked ? '2.5px solid #1a1a1a' : '2px solid #a0a0a0'}; border-radius: 14px; background: #efefef; }
        .ic { display: flex; align-items: center; justify-content: center; width: 50px; height: 51px; border-radius: 11px; background: #e3e3e3; color: #1a1a1a; flex: none; }
        .t { font-size: 19px; font-weight: 500; line-height: 26px; color: #1a1a1a; letter-spacing: .5px; }
        .s { font-size: 19px; line-height: 26px; color: #5f5f5f; letter-spacing: .5px; }
      </style>
      <div class="ic"><ui-icon name="${this.getAttribute('icon')}" size="33" sw="1.9"></ui-icon></div>
      <div><div class="t"><slot name="title"></slot></div><div class="s"><slot name="sub"></slot></div></div>`;
  }
}
customElements.define('export-option', ExportOption);

class ExportDialog extends HTMLElement {
  connectedCallback() {
    this.attachShadow({ mode: 'open' }).innerHTML = `
      <style>
        :host { display: block; box-sizing: border-box; width: 830px; border-radius: 28px; background: #f9f9f9; box-shadow: 0 0 0 1px #dcdcdc; color: #1a1a1a; }
        .head { display: flex; align-items: center; justify-content: space-between; box-sizing: border-box; height: 94px; padding: 0 34px; border-bottom: 2px solid #e2e2e2; font-size: 24px; font-weight: 600; }
        .tabs { display: flex; align-items: center; box-sizing: border-box; height: 68px; padding: 0 0 0 34px; gap: 10px; border-bottom: 2px solid #e2e2e2; font-size: 19.5px; letter-spacing: .5px; color: #555; }
        .tabs span { padding: 0 9px; line-height: 40px; border-radius: 6px; }
        .tabs .on { background: #d9d9d9; color: #333; font-weight: 500; }
        .body { display: flex; flex-direction: column; box-sizing: border-box; height: 326px; padding: 33px 34px 0; gap: 20px; }
        .body p { margin: 0 0 -2px; font-size: 19px; line-height: 28px; letter-spacing: .45px; color: #555; }
        .foot { display: flex; align-items: center; justify-content: space-between; box-sizing: border-box; height: 100px; padding: 0 33px 0 34px; border-top: 2px solid #e2e2e2; font-size: 26px; letter-spacing: .3px; }
        .foot div { display: flex; align-items: center; box-sizing: border-box; height: 44px; border-radius: 10px; margin-top: -1px; }
        .back { gap: 9px; width: 132px; padding-left: 14px; border: 2px solid #a8a8a8; background: #fdfdfd; color: #1a1a1a; }
        .go { width: 232px; justify-content: center; background: #1a1a1a; color: #fafafa; }
      </style>
      <div class="head"><span>Export Post</span><ui-icon name="x" size="32" sw="2" style="margin-right:3px"></ui-icon></div>
      <div class="tabs"><span style="padding-right:0">Scope</span><span style="padding-right:0;margin-left:8px">Fields</span><span style="padding-right:0;margin-left:8px">Preview</span><span class="on" style="margin-left:7px">Export Type</span></div>
      <div class="body">
        <p>10 posts with 96 fields. Choose export type:</p>
        <export-option picked icon="download"><span slot="title">Download File</span><span slot="sub">Save as .rp-export.json to your computer</span></export-option>
        <export-option icon="globe"><span slot="title">Send to WordPress</span><span slot="sub">Transfer directly to another WordPress site</span></export-option>
      </div>
      <div class="foot">
        <div class="back"><ui-icon name="back" size="26" sw="2"></ui-icon><span>Back</span></div>
        <div class="go">Export 10 posts</div>
      </div>`;
  }
}
customElements.define('export-dialog', ExportDialog);
</script>
</body>
</html>
